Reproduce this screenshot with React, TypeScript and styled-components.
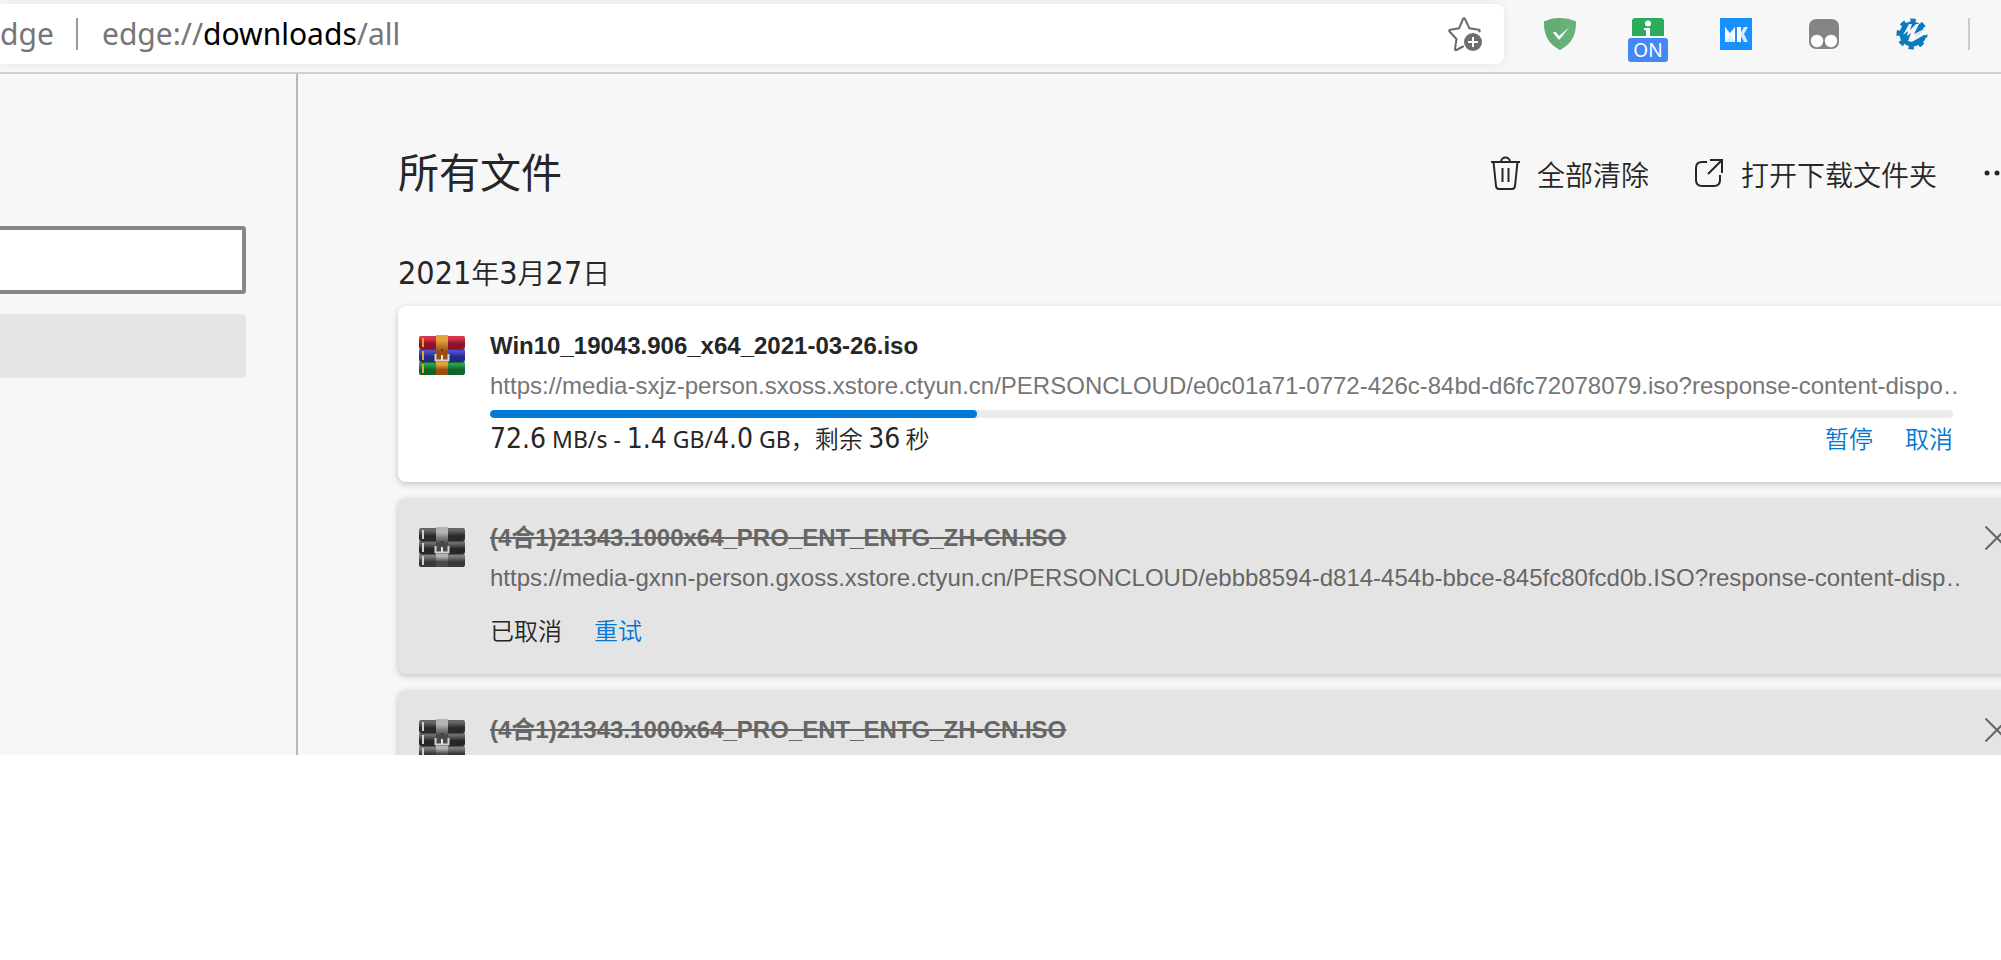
import React from "react";
import styled, { createGlobalStyle } from "styled-components";

const latin = `"Noto Sans", "Noto Sans CJK SC", sans-serif`;
const cjk = `"Noto Sans CJK SC", sans-serif`;
const arial = `"Liberation Sans", "Noto Sans CJK SC", sans-serif`;

const GlobalStyle = createGlobalStyle`
  *, *::before, *::after { box-sizing: border-box; }
  body { margin: 0; background: #fff; color: #262626; font-family: ${latin}; overflow-x: hidden; }
  button, input { font: inherit; color: inherit; }
`;

const Browser = styled.div`
  background: #f7f7f7;
  overflow: hidden;
`;

const Toolbar = styled.header`
  display: flex;
  align-items: flex-start;
  height: 74px;
  padding-top: 4px;
  border-bottom: 2px solid #d0d0d0;
`;

const AddressBar = styled.div`
  flex: 1;
  display: flex;
  align-items: center;
  height: 60px;
  padding-right: 20px;
  background: #fff;
  border-radius: 0 8px 8px 0;
  box-shadow: 0 0 10px rgba(0, 0, 0, 0.08);
  font-size: 30px;
  line-height: 40px;
  color: #767676;
`;

const Divider = styled.span<{ $color: string }>`
  width: 2px;
  height: 32px;
  background: ${(p) => p.$color};
`;

const SiteName = styled.span`
  width: 76px;
`;

const Url = styled.span`
  flex: 1;
  padding-left: 24px;

  b { font-weight: 400; color: #000; }
`;

const IconButton = styled.button`
  display: flex;
  align-items: center;
  justify-content: center;
  flex: none;
  padding: 0;
  border: 0;
  background: none;
`;

const Extensions = styled.div`
  display: flex;
  gap: 56px;
  padding: 14px 40px 0;
`;

const ExtensionButton = styled(IconButton)`
  position: relative;
  width: 32px;
  height: 32px;
`;

const Badge = styled.span`
  position: absolute;
  top: 20px;
  left: -4px;
  width: 40px;
  height: 24px;
  border-radius: 3px;
  background: #4688f1;
  color: #fff;
  font-size: 19px;
  line-height: 24px;
  text-align: center;
`;

const ToolbarEnd = styled.div`
  display: flex;
  padding: 14px 31px 0 0;
`;

const Page = styled.div`
  display: flex;
  height: 681px;
`;

const Sidebar = styled.nav`
  flex: none;
  display: flex;
  flex-direction: column;
  gap: 20px;
  width: 298px;
  padding: 152px 50px 0 0;
  border-right: 2px solid #b8b8b8;
`;

const SearchInput = styled.input`
  width: 100%;
  height: 68px;
  border: 4px solid #888;
  border-left: 0;
  border-radius: 0 4px 4px 0;
  background: #fff;
  outline: none;
`;

const SidebarItem = styled.a`
  height: 64px;
  border-radius: 0 4px 4px 0;
  background: #e4e4e4;
`;

const Main = styled.main`
  flex: 1;
  min-width: 0;
  padding: 68px 0 0 100px;
  overflow: hidden;
`;

const TitleRow = styled.div`
  display: flex;
  align-items: flex-start;
  height: 60px;
  margin-right: -40px;
`;

const Title = styled.h1`
  flex: 1;
  margin: 0;
  font: 400 41px/56px ${cjk};
`;

const Action = styled.button`
  display: flex;
  align-items: center;
  gap: 16px;
  height: 64px;
  margin-right: 44px;
  padding: 0;
  border: 0;
  background: none;
  font: 350 28px/40px ${cjk};

  & + & { margin-right: 16px; }
`;

const EdgeButton = styled(IconButton)`
  width: 88px;
  height: 32px;
`;

const MoreButton = styled(EdgeButton)`
  height: 64px;
`;

const DateHeading = styled.h2`
  height: 54px;
  margin: 50px 0 0;
  font: 350 28px/40px ${cjk};
`;

const Digits = styled.span<{ $size: number }>`
  font: 400 ${(p) => p.$size}px/32px "DejaVu Sans Condensed", "DejaVu Sans", sans-serif;
`;

const List = styled.ul`
  display: flex;
  flex-direction: column;
  gap: 16px;
  margin: 0 -40px 0 0;
  padding: 0;
  list-style: none;
`;

const Card = styled.li<{ $cancelled?: boolean }>`
  display: flex;
  height: 176px;
  padding: 24px 0 0 20px;
  border-radius: 8px;
  background: ${(p) => (p.$cancelled ? "#e4e4e4" : "#fff")};
  box-shadow: 0 2px 6px rgba(0, 0, 0, 0.22);
`;

const FileIcon = styled.svg`
  flex: none;
  width: 48px;
  height: 48px;
  margin-right: 24px;
`;

const Details = styled.div`
  flex: 1;
  min-width: 0;
`;

const FileName = styled.div<{ $cancelled?: boolean }>`
  font: 700 24px/32px ${arial};
  color: ${(p) => (p.$cancelled ? "#666" : "#262626")};
  text-decoration: ${(p) => (p.$cancelled ? "line-through" : "none")};
`;

const FileUrl = styled.a<{ $cancelled?: boolean }>`
  display: block;
  margin: 8px -6px 8px 0;
  overflow: hidden;
  white-space: nowrap;
  font: 400 24px/32px ${arial};
  color: ${(p) => (p.$cancelled ? "#666" : "#767676")};
  text-decoration: none;
`;

const Track = styled.div`
  height: 8px;
  margin-bottom: 4px;
  border-radius: 4px;
  background: #ebebeb;
  overflow: hidden;
`;

const Fill = styled.div`
  height: 8px;
  border-radius: 4px;
  background: #0078d7;
`;

const StatusRow = styled.div<{ $offset?: boolean }>`
  display: flex;
  gap: 32px;
  height: 32px;
  margin-top: ${(p) => (p.$offset ? "20px" : "0")};
  font: 350 24px/32px ${cjk};
`;

const Status = styled.span<{ $grow?: boolean }>`
  flex: ${(p) => (p.$grow ? "1" : "none")};
  white-space: nowrap;
`;

const Unit = styled.span`
  font: 400 23px/32px "Noto Sans", sans-serif;
`;

const LinkButton = styled.button`
  padding: 0;
  border: 0;
  background: none;
  color: #0078d4;
`;

const colour = { top: ["#d8324f", "#8d1428"], mid: ["#4a4fd0", "#232a86"], low: ["#25a04e", "#0f6428"], strap: ["#e2a23c", "#9a4f12"], edge: "#f0a030" };
const grey = { top: ["#666", "#2a2a2a"], mid: ["#6a6a6a", "#262626"], low: ["#7c7c7c", "#383838"], strap: ["#b4b4b4", "#4a4a4a"], edge: "#d0d0d0" };

function ArchiveIcon({ muted }: { muted?: boolean }) {
  const c = muted ? grey : colour;
  const k = muted ? "g" : "c";
  const books: [string, string[], number][] = [["t", c.top, 6], ["m", c.mid, 19], ["l", c.low, 32]];
  return (
    <FileIcon viewBox="0 0 48 48" aria-hidden="true">
      <defs>
        {[...books, ["s", c.strap, 0] as [string, string[], number]].map(([id, stops]) => (
          <linearGradient key={id} id={k + id} x1="0" y1="0" x2="0" y2="1">
            <stop offset="0.2" stopColor={stops[0]} />
            <stop offset="0.6" stopColor={stops[1]} />
            <stop offset="1" stopColor={stops[1]} />
          </linearGradient>
        ))}
      </defs>
      {books.map(([id, , y]) => (
        <g key={id}>
          <rect x="1" y={y} width="46" height="13" rx="2" fill={`url(#${k + id})`} />
          <rect x="4" y={y + 2} width="2" height="9" fill={c.edge} />
        </g>
      ))}
      <path d="M1 19.500H47M1 32.500H47" stroke="#181818" strokeOpacity="0.35" />
      <rect x="18" y="5" width="12" height="27" rx="1" fill={`url(#${k}s)`} />
      <rect x="18" y="32" width="12" height="13" fill={`url(#${k}s)`} />
      <path d="M17.500 24v6.500h13V24" fill="none" stroke="#d4d4d4" strokeWidth="2" strokeLinejoin="round" />
      <path d="M24 25v5" stroke="#e6e6e6" strokeWidth="2" />
      <circle cx="24" cy="20" r="1" fill="#333" />
    </FileIcon>
  );
}

const CloseIcon = () => (
  <svg width="24" height="24" viewBox="0 0 24 24" fill="none" stroke="#666" strokeWidth="2">
    <path d="M0.500 0.500l23 23M23.500 0.500l-23 23" />
  </svg>
);

function CancelledCard() {
  return (
    <Card $cancelled>
      <ArchiveIcon muted />
      <Details>
        <FileName $cancelled>(4合1)21343.1000x64_PRO_ENT_ENTG_ZH-CN.ISO</FileName>
        <FileUrl $cancelled href="#">
          https://media-gxnn-person.gxoss.xstore.ctyun.cn/PERSONCLOUD/ebbb8594-d814-454b-bbce-845fc80fcd0b.ISO?response-content-disp…
        </FileUrl>
        <StatusRow $offset>
          <Status>已取消</Status>
          <LinkButton>重试</LinkButton>
        </StatusRow>
      </Details>
      <EdgeButton aria-label="关闭"><CloseIcon /></EdgeButton>
    </Card>
  );
}

const progress = 33.3;

export default function App() {
  return (
    <>
      <GlobalStyle />
      <Browser>
        <Toolbar>
          <AddressBar>
            <SiteName>dge</SiteName>
            <Divider $color="#999" />
            <Url>edge://<b>downloads</b>/all</Url>
            <IconButton aria-label="收藏">
              <svg width="36" height="36" viewBox="0 0 36 36" fill="none">
                <path d="M15 30.500l-6.500 3.500c-1 .4-1.600-.2-1.500-1.200L8.500 23 1.500 15.500c-.6-.8-.3-1.600.7-1.800l9-1.500L15 3c.5-1 1.500-1 2 0l4.300 9.200 9.500 1.500c1 .2 1.200 1 .7 1.700" stroke="#6b6b6b" strokeWidth="2" strokeLinecap="round" strokeLinejoin="round" />
                <circle cx="25" cy="26" r="9" fill="#6e6e6e" />
                <path d="M25 21v10M20 26h10" stroke="#fff" strokeWidth="2" />
              </svg>
            </IconButton>
          </AddressBar>
          <Extensions>
            <ExtensionButton aria-label="AdGuard">
              <svg width="32" height="32" viewBox="0 0 32 32">
                <path d="M16 0C11 0 5 1 0 3.500c0 11 2 21 16 28.500 14-7.500 16-17.500 16-28.500C27 1 21 0 16 0z" fill="#67b279" />
                <path d="M16 0C11 0 5 1 0 3.500c0 11 2 21 16 28.500z" fill="#5fa870" fillOpacity="0.5" />
                <path d="M9 14.500c1-1 2.500-1 3.200 0l3 3.500L25 9.500 16 21c-.6.8-1.200.8-1.800 0z" fill="#fff" />
              </svg>
            </ExtensionButton>
            <ExtensionButton aria-label="ON">
              <svg width="32" height="32" viewBox="0 0 32 32">
                <path d="M2 0h28l2 2v16H0V2z" fill="#2bab5c" />
                <circle cx="16" cy="5.500" r="3" fill="#fff" />
                <path d="M12 10h6v8h-4v-6h-2z" fill="#fff" />
              </svg>
              <Badge>ON</Badge>
            </ExtensionButton>
            <ExtensionButton aria-label="MK">
              <svg width="32" height="32" viewBox="0 0 32 32">
                <path d="M0 0h32v32H0z" fill="#1890ff" />
                <path d="M5 9l5 6 5-6v15H5z" fill="#d6ecff" />
                <path d="M5 9l5 8-5 7zM15 9v15l-5-8z" fill="#fff" />
                <path d="M17 9h4v15h-4z" fill="#fff" />
                <path d="M20 16l4-7h4l-4 7 4 8h-4z" fill="#d6ecff" />
              </svg>
            </ExtensionButton>
            <ExtensionButton aria-label="Tampermonkey">
              <svg width="32" height="32" viewBox="0 0 32 32">
                <rect x="0.500" y="0.500" width="31" height="31" rx="7" fill="#fff" />
                <rect x="1" y="1" width="30" height="30" rx="7" fill="#858585" />
                <circle cx="9" cy="23" r="6.200" fill="#fff" />
                <circle cx="23" cy="23" r="6.200" fill="#fff" />
              </svg>
            </ExtensionButton>
            <ExtensionButton aria-label="扩展">
              <svg width="32" height="32" viewBox="0 0 32 32">
                <circle cx="16" cy="16" r="12.500" fill="#0a7ac0" />
                <circle cx="16" cy="16" r="13.500" fill="none" stroke="#0a7ac0" strokeWidth="4" strokeDasharray="5.300 5.300" strokeDashoffset="2" />
                <path d="M7 17L13 6h3l-2 6 6-6h3l-5 10 14-7v7L16 24l-4-1 3-8-4 3 1-5z" fill="#f7f7f7" />
                <path d="M19 16l10-5-9 8z" fill="#0a7ac0" fillOpacity="0.15" />
                <path d="M16 24l12-7h2c0 3-1 6-4 8l-6 3z" fill="#0a7ac0" />
              </svg>
            </ExtensionButton>
          </Extensions>
          <ToolbarEnd><Divider $color="#ccc" /></ToolbarEnd>
        </Toolbar>
        <Page>
          <Sidebar>
            <SearchInput type="search" aria-label="搜索下载" />
            <SidebarItem href="#" aria-label="所有文件" />
          </Sidebar>
          <Main>
            <TitleRow>
              <Title>所有文件</Title>
              <Action>
                <svg width="32" height="36" viewBox="0 0 32 36" fill="none" stroke="#262626" strokeWidth="2" strokeLinejoin="round">
                  <path d="M2 6h29M12 6c0-6 9-6 9 0M4.500 6l2.500 24c.2 2 1 3 3 3h13c2 0 2.800-1 3-3L28.500 6M13.500 12v14M19.500 12v14" />
                </svg>
                全部清除
              </Action>
              <Action>
                <svg width="32" height="32" viewBox="0 0 32 32" fill="none" stroke="#262626" strokeWidth="2">
                  <path d="M14 4H9C5 4 3 6 3 10v12c0 4 2 6 6 6h12c4 0 6-2 6-6v-5M17 2h12v13M29 2L15 16" />
                </svg>
                打开下载文件夹
              </Action>
              <MoreButton aria-label="更多选项">
                <svg width="32" height="8" viewBox="0 0 32 8" fill="#262626">
                  <circle cx="6" cy="3" r="2.500" /><circle cx="16" cy="3" r="2.500" /><circle cx="26" cy="3" r="2.500" />
                </svg>
              </MoreButton>
            </TitleRow>
            <DateHeading>
              <Digits $size={32}>2021</Digits>年<Digits $size={32}>3</Digits>月<Digits $size={32}>27</Digits>日
            </DateHeading>
            <List>
              <Card>
                <ArchiveIcon />
                <Details>
                  <FileName>Win10_19043.906_x64_2021-03-26.iso</FileName>
                  <FileUrl href="#">
                    https://media-sxjz-person.sxoss.xstore.ctyun.cn/PERSONCLOUD/e0c01a71-0772-426c-84bd-d6fc72078079.iso?response-content-dispo…
                  </FileUrl>
                  <Track role="progressbar" aria-label="下载进度" aria-valuenow={progress}>
                    <Fill style={{ width: `${progress}%` }} />
                  </Track>
                  <StatusRow>
                    <Status $grow>
                      <Digits $size={28}>72.6</Digits><Unit> MB/s - </Unit><Digits $size={28}>1.4</Digits><Unit> GB/</Unit><Digits $size={28}>4.0</Digits><Unit> GB</Unit>，剩余 <Digits $size={28}>36</Digits> 秒
                    </Status>
                    <LinkButton>暂停</LinkButton>
                    <LinkButton>取消</LinkButton>
                  </StatusRow>
                </Details>
                <EdgeButton as="span" />
              </Card>
              <CancelledCard />
              <CancelledCard />
            </List>
          </Main>
        </Page>
      </Browser>
    </>
  );
}
